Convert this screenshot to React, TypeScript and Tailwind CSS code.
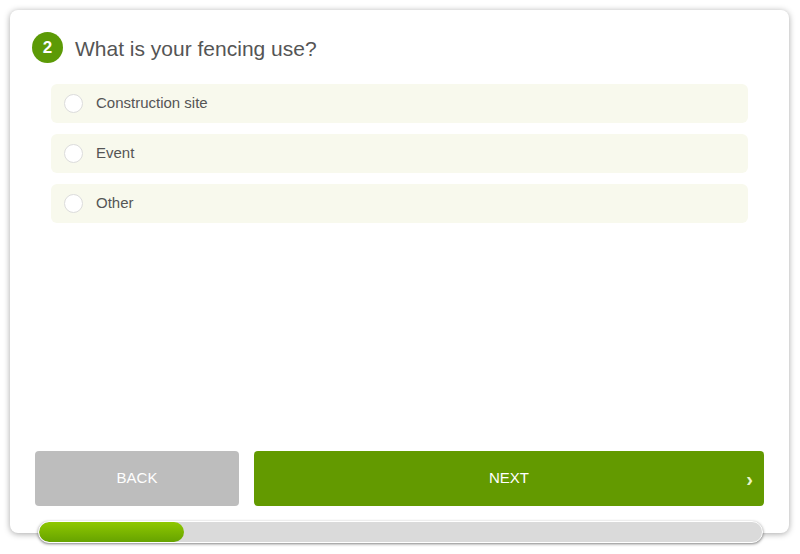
import React from "react";

const options = ["Construction site", "Event", "Other"];

export default function App() {
  return (
    <div
      className="w-[800px] h-[554px] bg-white relative"
      style={{ fontFamily: '"Liberation Sans", Arial, sans-serif' }}
    >
      <div className="absolute left-[10px] top-[10px] w-[779px] h-[523px] bg-white rounded-[8px] shadow-[0_1px_6px_rgba(0,0,0,0.35)] flex flex-col">
        <div className="flex items-center gap-[12px] pl-[22px] pt-[22px]">
          <div className="w-[31px] h-[31px] rounded-full bg-[#5c9a06] text-white font-bold text-[17px] flex items-center justify-center">
            2
          </div>
          <div className="text-[21px] text-[#555555] leading-none pt-[2px]">What is your fencing use?</div>
        </div>
        <div className="flex flex-col gap-[11px] px-[41px] mt-[21px]">
          {options.map((o) => (
            <div
              key={o}
              className="h-[39px] rounded-[6px] bg-[#f8f9ed] flex items-center pl-[13px]"
            >
              <div className="w-[19px] h-[19px] rounded-full bg-white border border-[#dcdcdc]" />
              <span className="ml-[13px] text-[15px] text-[#555555]">{o}</span>
            </div>
          ))}
        </div>
        <div className="flex-1" />
        <div className="flex gap-[15px] px-[25px] mb-[27px]">
          <button className="w-[204px] h-[55px] rounded-[4px] bg-[#bdbdbd] text-white text-[15px]">
            BACK
          </button>
          <button className="flex-1 h-[55px] rounded-[4px] bg-[#639a00] text-white text-[15px] relative">
            NEXT
            <span className="absolute right-[11px] top-1/2 -translate-y-1/2 text-[20px] font-bold text-[#e9f5c8] leading-none">
              ›
            </span>
          </button>
        </div>
      </div>
      <div className="absolute left-[38px] top-[521px] w-[725px] h-[22px] rounded-full bg-[#dadada] border border-white shadow-[0_1px_3px_rgba(0,0,0,0.5)] overflow-hidden">
        <div className="h-full w-[145px] rounded-full bg-gradient-to-b from-[#8fc800] to-[#66a300]" />
      </div>
    </div>
  );
}
